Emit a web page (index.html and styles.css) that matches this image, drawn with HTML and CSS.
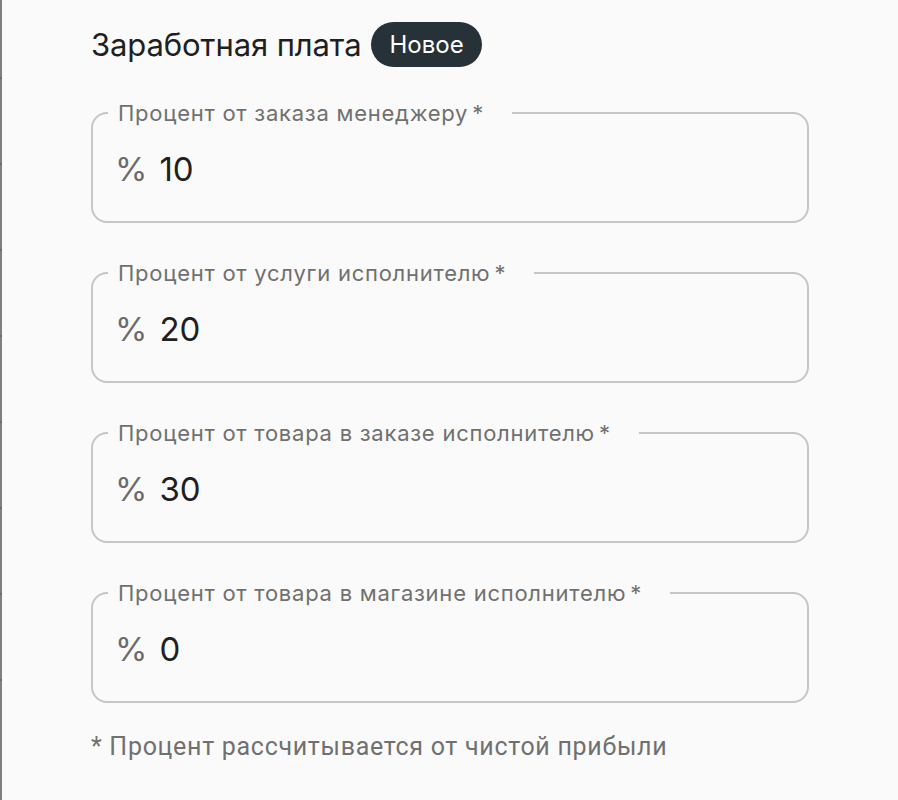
FILE: index.html
```html
<!DOCTYPE html>
<html lang="ru">
<head>
<meta charset="utf-8">
<link rel="stylesheet" href="styles.css">
</head>
<body>
<div class="rail">
  <span class="tick"></span><span class="tick"></span><span class="tick"></span><span class="tick"></span><span class="tick"></span><span class="tick"></span><span class="tick"></span><span class="tick"></span>
</div>
<main class="page">
  <div class="head">
    <h2 class="title">Заработная плата</h2>
    <span class="badge">Новое</span>
  </div>
  <fieldset class="field">
    <legend class="label">Процент от заказа менеджеру<span class="req">*</span></legend>
    <div class="value"><span class="unit">%</span><span class="num">10</span></div>
  </fieldset>
  <fieldset class="field">
    <legend class="label">Процент от услуги исполнителю<span class="req">*</span></legend>
    <div class="value"><span class="unit">%</span><span class="num">20</span></div>
  </fieldset>
  <fieldset class="field">
    <legend class="label">Процент от товара в заказе исполнителю<span class="req">*</span></legend>
    <div class="value"><span class="unit">%</span><span class="num">30</span></div>
  </fieldset>
  <fieldset class="field">
    <legend class="label">Процент от товара в магазине исполнителю<span class="req">*</span></legend>
    <div class="value"><span class="unit">%</span><span class="num">0</span></div>
  </fieldset>
  <p class="note">* Процент рассчитывается от чистой прибыли</p>
</main>
</body>
</html>
```
FILE: styles.css
```css
html, body {
  margin: 0;
  padding: 0;
  background: #fafafa;
}
body {
  display: flex;
  min-height: 800px;
  font-family: Inter, "Noto Sans", sans-serif;
}
.rail {
  width: 2px;
  background: #7f7f7f;
  display: flex;
  flex-direction: column;
  padding-top: 77px;
  gap: 84px;
}
.tick {
  display: block;
  width: 2px;
  height: 2px;
  background: #6a6a6a;
}
.page {
  padding: 22px 0 0 89px;
  width: 718px;
}
.head {
  display: flex;
  align-items: center;
  gap: 10px;
  height: 45px;
}
.title {
  margin: 0;
  font-size: 31px;
  font-weight: 400;
  color: #1f1f1f;
  letter-spacing: -0.1px;
}
.badge {
  background: #263238;
  color: #ffffff;
  font-size: 24px;
  height: 45px;
  display: flex;
  align-items: center;
  padding: 0 18px;
  border-radius: 23px;
}
.field {
  margin: 33px 0 0 0;
  padding: 0;
  border: 2px solid #c6c6c6;
  border-radius: 16px;
  min-width: 0;
}
.field + .field {
  margin-top: 37px;
}
.label {
  margin-left: 15px;
  padding: 0 28px 0 10px;
  font-size: 22px;
  line-height: 26px;
  color: #707070;
  letter-spacing: 0.75px;
}
.req {
  margin-left: 4px;
}
.value {
  display: flex;
  align-items: center;
  height: 95px;
  padding-left: 22px;
  padding-bottom: 10px;
  box-sizing: border-box;
  font-size: 33px;
}
.unit {
  color: #6b6b6b;
  margin-right: 12px;
}
.num {
  color: #1f1f1f;
}
.note {
  margin: 30px 0 0 0;
  font-family: Roboto, sans-serif;
  font-size: 25px;
  line-height: 28px;
  color: #707070;
  letter-spacing: 0.7px;
}
```
